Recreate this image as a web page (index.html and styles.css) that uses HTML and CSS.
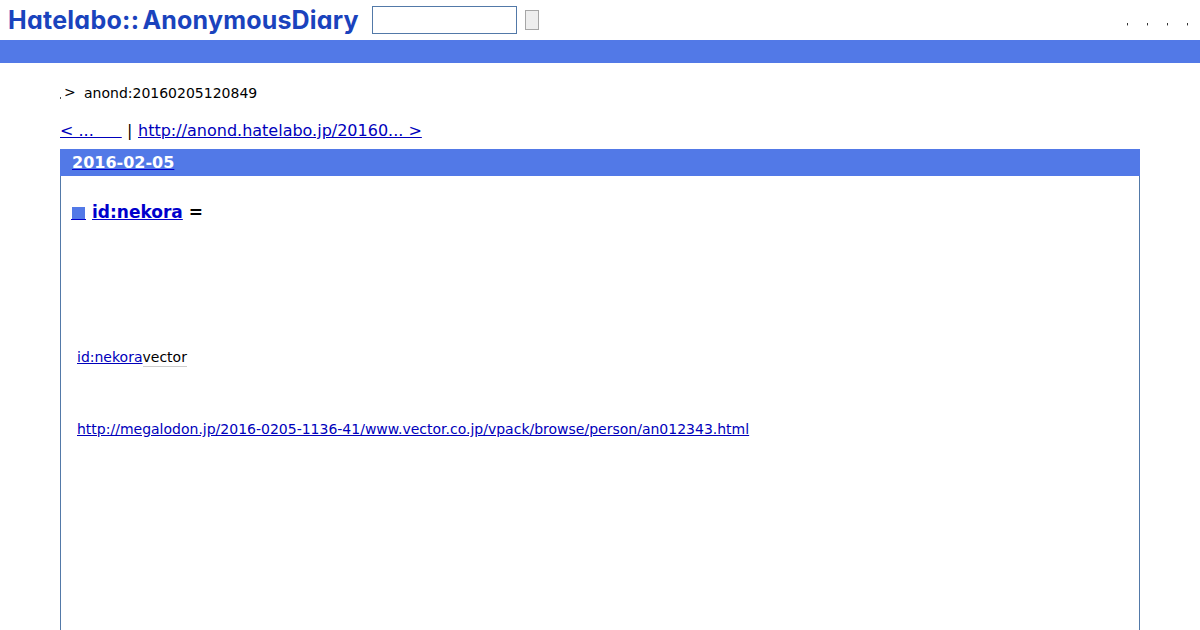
FILE: index.html
```
<!DOCTYPE html>
<html lang="ja">
<head>
  <meta charset="UTF-8">
  <title>anond:20160205120849</title>
  <link rel="stylesheet" href="styles.css">
</head>
<body>
  <div class="header">
    <svg class="logo" width="360" height="40" viewBox="0 0 360 40">
      <text x="8" y="28.7" textLength="131">Hatelabo::</text>
      <text x="142.5" y="28.7" textLength="216">AnonymousDiary</text>
    </svg>
    <form class="search">
      <input type="text" class="search-word">
      <button type="button" class="search-button"></button>
    </form>
    <ul class="menu">
      <li></li>
      <li></li>
      <li></li>
      <li></li>
    </ul>
  </div>
  <div class="bar"></div>

  <div class="content">
    <p class="breadcrumbs"><span class="dot"></span><span class="arrow">&gt;</span><span>anond:20160205120849</span></p>
    <div class="pager">
      <a href="#" class="prev">&lt; ...&emsp;&ensp;&emsp14;</a>
      <span class="separator">|</span>
      <a href="#">http://anond.hatelabo.jp/20160... &gt;</a>
    </div>

    <div class="day">
      <h2><a href="#">2016-02-05</a></h2>
      <div class="body">
        <h3><a href="#" class="mark"><span></span></a><a href="#">id:nekora</a> =</h3>
        <p class="author"><a href="#">id:nekora</a><span class="keyword">vector</span></p>
        <p class="source"><a href="#">http://megalodon.jp/2016-0205-1136-41/www.vector.co.jp/vpack/browse/person/an012343.html</a></p>
      </div>
    </div>
  </div>
</body>
</html>
```

FILE: styles.css
```
* {
  box-sizing: border-box;
}
body {
  margin: 0;
  height: 630px;
  overflow: hidden;
  display: flex;
  flex-direction: column;
  background: #fff;
  color: #000;
  font-family: "DejaVu Sans", sans-serif;
  font-size: 14px;
}
a {
  color: #0000bb;
}
.header {
  display: flex;
  height: 40px;
}
.logo {
  font-family: Inter, Lato, sans-serif;
  font-size: 25px;
  font-weight: 700;
  font-feature-settings: "cv11";
  fill: #1a43bd;
}
.search {
  display: flex;
  align-items: center;
  gap: 8px;
  margin-left: 12px;
}
.search-word {
  width: 145px;
  height: 28px;
  border: 1px solid #5279a8;
}
.search-button {
  width: 14px;
  height: 20px;
  padding: 0;
  border: 1px solid #a6a6a6;
  background: #eee;
}
.menu {
  display: flex;
  gap: 19px;
  margin: 23px 12px 0 auto;
  padding: 0;
  list-style: none;
}
.menu li {
  width: 1px;
  height: 3px;
  background: linear-gradient(#333 67%, #aaa 67%);
}
.bar {
  height: 23px;
  flex-shrink: 0;
  background: #5279e7;
}
.content {
  flex: 1;
  display: flex;
  flex-direction: column;
  padding: 0 60px;
}
.breadcrumbs {
  display: flex;
  margin: 22px 0 0;
  line-height: 16px;
}
.dot {
  width: 1px;
  height: 2px;
  margin: 12px 3px 0 0;
  background: #555;
}
.arrow {
  width: 20px;
  margin-top: -1px;
}
.pager {
  display: flex;
  margin-top: 20px;
  font-size: 16px;
  line-height: 19px;
}
.prev {
  width: 62px;
  white-space: pre;
}
.separator {
  width: 16px;
  padding-left: 5px;
}
.day {
  flex: 1;
  margin-top: 9px;
  border: 1px solid #5279a8;
  border-width: 0 1px;
}
.day h2 {
  margin: 0 -1px;
  padding-left: 12px;
  height: 27px;
  background: #5279e7;
  font-size: 16px;
  line-height: 27px;
}
.day h2 a {
  color: #fff;
  text-decoration-color: #0000cc;
}
.body {
  padding: 25px 10px 0;
}
.body h3 {
  display: flex;
  margin: 0;
  font-size: 17px;
  line-height: 22px;
  white-space: pre;
}
.body h3 a {
  color: #0000cc;
}
.mark {
  width: 15px;
  height: 13px;
  margin: 6px 6px 0 0;
  padding: 0 1px;
  border-bottom: 1px solid #0000cc;
}
.mark span {
  display: block;
  height: 12px;
  background: #5279e7;
}
.body p {
  margin: 0 6px;
  line-height: 18px;
}
.body .author {
  margin-top: 125px;
}
.body .source {
  margin-top: 54px;
}
.keyword {
  padding-bottom: 1px;
  border-bottom: 1px solid #ccc;
}
```
